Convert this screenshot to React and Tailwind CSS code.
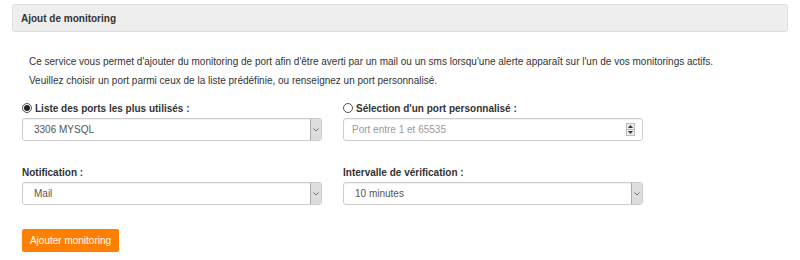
import React from 'react';

const font = { fontFamily: '"Liberation Sans", Arial, sans-serif' };

// Radio bullet drawn as a circle
const Radio = ({ checked }) => (
  <span className="inline-flex items-center justify-center w-[10px] h-[10px] rounded-full border border-[#555] bg-white mr-[3px]">
    {checked && <span className="w-[6px] h-[6px] rounded-full bg-[#222]"></span>}
  </span>
);

const FakeSelect = ({ value }) => (
  <div className="flex items-stretch h-[23px] border border-[#cccccc] rounded-[3px] bg-white shadow-[inset_0_1px_1px_rgba(0,0,0,0.06)]">
    <div className="flex-1 flex items-center pl-[11px] text-[10px] text-[#555]">{value}</div>
    <div className="w-[11px] flex items-center justify-center bg-[#dddddd] border-l border-[#aaaaaa] rounded-r-[2px]">
      <svg width="6" height="4" viewBox="0 0 6 4">
        <path d="M0.5 0.5 L3 3 L5.5 0.5" fill="none" stroke="#666" strokeWidth="0.9" />
      </svg>
    </div>
  </div>
);

const NumberInput = ({ placeholder }) => (
  <div className="flex items-center h-[23px] border border-[#cccccc] rounded-[3px] bg-white pl-[8px] pr-[7px] shadow-[inset_0_1px_1px_rgba(0,0,0,0.06)]">
    <div className="flex-1 text-[10px] text-[#999]">{placeholder}</div>
    <div className="flex flex-col w-[9px] h-[13px] border border-[#bbb] bg-[#eeeeee]">
      <div className="flex-1 flex items-center justify-center border-b border-[#bbb]">
        <svg width="5" height="3" viewBox="0 0 5 3"><path d="M0 3 L2.5 0 L5 3 Z" fill="#333" /></svg>
      </div>
      <div className="flex-1 flex items-center justify-center">
        <svg width="5" height="3" viewBox="0 0 5 3"><path d="M0 0 L2.5 3 L5 0 Z" fill="#333" /></svg>
      </div>
    </div>
  </div>
);

const Label = ({ children }) => (
  <div className="flex items-center h-[14px] mb-[3px] text-[10px] font-bold text-[#333]">{children}</div>
);

export default function App() {
  return (
    <div className="w-[800px] h-[260px] bg-white pt-[4px] overflow-hidden" style={font}>
      <div className="mx-[12px] h-[28px] flex items-center px-[8px] bg-[#eeeeee] border border-[#dddddd] rounded-[3px]">
        <span className="text-[10px] font-bold text-[#333]">Ajout de monitoring</span>
      </div>

      <div className="px-[22px]">
        <div className="pl-[7px] pt-[20px] text-[10px] text-[#333] leading-[19px]">
          <p>Ce service vous permet d'ajouter du monitoring de port afin d'être averti par un mail ou un sms lorsqu'une alerte apparaît sur l'un de vos monitorings actifs.</p>
          <p>Veuillez choisir un port parmi ceux de la liste prédéfinie, ou renseignez un port personnalisé.</p>
        </div>

        <div className="grid grid-cols-[300px_300px] gap-x-[21px] mt-[11px]">
          <div>
            <Label><Radio checked />Liste des ports les plus utilisés :</Label>
            <FakeSelect value="3306 MYSQL" />
          </div>
          <div>
            <Label><Radio />Sélection d'un port personnalisé :</Label>
            <NumberInput placeholder="Port entre 1 et 65535" />
          </div>

          <div className="mt-[24px]">
            <Label>Notification :</Label>
            <FakeSelect value="Mail" />
          </div>
          <div className="mt-[24px]">
            <Label>Intervalle de vérification :</Label>
            <FakeSelect value="10 minutes" />
          </div>
        </div>

        <button className="mt-[24px] h-[23px] w-[97px] bg-[#ff8000] text-white text-[10px] rounded-[2px] flex items-center justify-center">
          Ajouter monitoring
        </button>
      </div>
    </div>
  );
}
